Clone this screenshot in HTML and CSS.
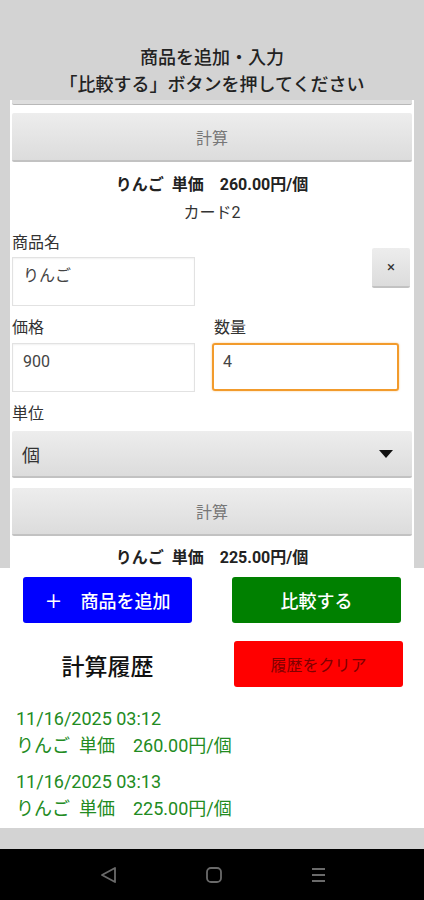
FILE: index.html
```html
<!DOCTYPE html>
<html lang="ja">
<head>
<meta charset="utf-8">
<link rel="stylesheet" href="styles.css">
</head>
<body>
<div class="screen">
  <header class="header">
    <div>商品を追加・入力</div>
    <div>「比較する」ボタンを押してください</div>
  </header>
  <main class="scroller">
    <div class="card">
      <div class="prev-edge"></div>
      <div class="btn-gray calc">計算</div>
      <div class="result">りんご&nbsp; 単価　260.00円/個</div>
      <div class="card-title">カード2</div>
      <div class="row name-row">
        <div class="field name-field">
          <div class="label">商品名</div>
          <div class="input">りんご</div>
        </div>
        <div class="btn-gray remove">×</div>
      </div>
      <div class="row num-row">
        <div class="field price-field">
          <div class="label">価格</div>
          <div class="input">900</div>
        </div>
        <div class="field qty-field">
          <div class="label">数量</div>
          <div class="input focused">4</div>
        </div>
      </div>
      <div class="label unit-label">単位</div>
      <div class="btn-gray select">
        <span>個</span>
        <svg class="caret" width="14" height="8" viewBox="0 0 14 8"><path d="M0 0 H14 L7 8 Z" fill="#111"/></svg>
      </div>
      <div class="btn-gray calc calc2">計算</div>
      <div class="result result2">りんご&nbsp; 単価　225.00円/個</div>
    </div>
  </main>
  <section class="panel">
    <div class="actions">
      <div class="btn btn-blue">＋　商品を追加</div>
      <div class="btn btn-green">比較する</div>
    </div>
    <div class="history-head">
      <div class="history-title">計算履歴</div>
      <div class="btn btn-red">履歴をクリア</div>
    </div>
    <ul class="history">
      <li>
        <div>11/16/2025 03:12</div>
        <div>りんご&nbsp; 単価　260.00円/個</div>
      </li>
      <li>
        <div>11/16/2025 03:13</div>
        <div>りんご&nbsp; 単価　225.00円/個</div>
      </li>
    </ul>
  </section>
  <div class="strip"></div>
  <nav class="navbar">
    <svg width="20" height="20" viewBox="0 0 20 20"><path d="M16 3 L3 10 L16 17 Z" fill="none" stroke="#6a6a6a" stroke-width="1.8" stroke-linejoin="round"/></svg>
    <svg width="20" height="20" viewBox="0 0 20 20"><rect x="3" y="3" width="14" height="14" rx="4" fill="none" stroke="#6a6a6a" stroke-width="1.8"/></svg>
    <svg width="20" height="20" viewBox="0 0 20 20"><path d="M3 4 H16 M3 10 H16 M3 16 H16" stroke="#6a6a6a" stroke-width="2"/></svg>
  </nav>
</div>
</body>
</html>
```

FILE: styles.css
```css
* { box-sizing: border-box; }
html, body { margin: 0; padding: 0; }
body {
  background: #d3d3d3;
  font-family: "Roboto", "Noto Sans CJK JP", sans-serif;
  color: #222;
}
.screen {
  width: 424px;
  height: 900px;
  display: flex;
  flex-direction: column;
  overflow: hidden;
}
.header {
  height: 100px;
  flex: none;
  padding-top: 44px;
  text-align: center;
  font-size: 18px;
  line-height: 27px;
  color: #222;
  font-weight: 500;
}
.scroller {
  height: 468px;
  flex: none;
  padding: 0 10px;
  overflow: hidden;
}
.card {
  background: #fff;
  height: 100%;
  padding: 0 2px;
  display: flex;
  flex-direction: column;
}
.prev-edge {
  height: 5px;
  background: #dedede;
  border-bottom: 1px solid #b8b8b8;
  border-radius: 0 0 2px 2px;
}
.btn-gray {
  background: linear-gradient(#ededed, #dcdcdc);
  border-bottom: 2px solid #c2c2c2;
  border-radius: 2px;
}
.calc {
  margin-top: 8px;
  height: 49px;
  display: flex;
  align-items: center;
  justify-content: center;
  font-size: 16px;
  color: #777;
}
.calc2 { margin-top: 10px; height: 48px; }
.result {
  margin-top: 13px;
  line-height: 20px;
  text-align: center;
  font-size: 16px;
  font-weight: 700;
  color: #222;
}
.result2 { margin-top: 12px; }
.card-title {
  margin-top: 8px;
  line-height: 20px;
  text-align: center;
  font-size: 16px;
  color: #333;
}
.row {
  display: flex;
  align-items: flex-start;
}
.name-row {
  margin-top: 10px;
  justify-content: space-between;
}
.num-row { margin-top: 12px; }
.label {
  font-size: 16px;
  line-height: 20px;
  color: #333;
}
.field .input { margin-top: 4px; }
.num-row .field .input { margin-top: 5px; }
.name-field, .price-field { width: 183px; }
.qty-field { width: 187px; margin-left: 17px; }
.qty-field .label { padding-left: 2px; }
.input {
  height: 49px;
  border: 1px solid #e2e2e2;
  box-shadow: inset 0 1px 2px rgba(0,0,0,0.06);
  padding: 8px 10px 0 10px;
  font-size: 16px;
  line-height: 20px;
  color: #444;
}
.input.focused {
  border: 2px solid #f29b2c;
  border-radius: 3px;
  padding: 7px 9px 0 9px;
  height: 48px;
  box-shadow: 0 0 2px rgba(242,155,44,0.6);
}
.remove {
  margin-top: 15px;
  margin-right: 2px;
  width: 38px;
  height: 40px;
  display: flex;
  align-items: center;
  justify-content: center;
  font-size: 15px;
  color: #333;
}
.unit-label { margin-top: 12px; }
.select {
  margin-top: 7px;
  height: 47px;
  display: flex;
  align-items: center;
  justify-content: space-between;
  padding: 0 19px 0 10px;
  font-size: 18px;
  color: #333;
}
.caret { display: block; }
.panel {
  background: #fff;
  height: 260px;
  flex: none;
  padding-top: 9px;
}
.actions {
  display: flex;
}
.btn {
  width: 169px;
  height: 46px;
  border-radius: 3px;
  display: flex;
  align-items: center;
  justify-content: center;
  font-size: 18px;
  font-weight: 500;
  color: #fff;
}
.btn-blue { background: #0000ff; margin-left: 23px; }
.btn-green { background: #008000; margin-left: 40px; }
.history-head {
  margin-top: 18px;
  display: flex;
  align-items: center;
}
.history-title {
  width: 169px;
  margin-left: 23px;
  text-align: center;
  font-size: 23px;
  font-weight: 500;
  color: #111;
  padding-top: 2px;
}
.btn-red {
  background: #ff0000;
  margin-left: 42px;
  font-size: 16px;
  font-weight: 400;
  color: #800000;
}
.history {
  list-style: none;
  margin: 18px 0 0 0;
  padding: 0 0 0 16px;
  color: #228b22;
  font-size: 18px;
  line-height: 27px;
}
.history li + li { margin-top: 9px; }
.strip {
  height: 21px;
  flex: none;
  background: #d3d3d3;
}
.navbar {
  height: 51px;
  flex: none;
  background: #000;
  display: flex;
  align-items: center;
  gap: 85px;
  padding-left: 99px;
}
.navbar svg { display: block; }
```
